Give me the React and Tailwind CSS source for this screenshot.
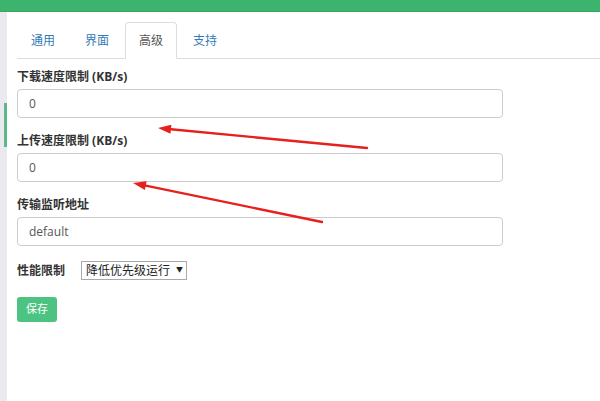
import { useState } from "react";

const tabs = ["通用", "界面", "高级", "支持"];

const fields = [
  { label: "下载速度限制 (KB/s)", value: "0" },
  { label: "上传速度限制 (KB/s)", value: "0" },
  { label: "传输监听地址", value: "default" },
];

const Arrow = ({ x1, y1, x2, y2 }) => {
  // tip is (x2, y2)
  const a = Math.atan2(y2 - y1, x2 - x1);
  const len = 13;
  const w = 4.5;
  const bx = x2 - len * Math.cos(a);
  const by = y2 - len * Math.sin(a);
  const px = -Math.sin(a) * w;
  const py = Math.cos(a) * w;
  return (
    <g>
      <line x1={x1} y1={y1} x2={bx} y2={by} stroke="#e5201d" strokeWidth="2.4" strokeLinecap="round" />
      <polygon points={`${x2},${y2} ${bx + px},${by + py} ${bx - px},${by - py}`} fill="#e5201d" />
    </g>
  );
};

export default function App() {
  const [active, setActive] = useState(2);

  return (
    <div
      className="relative h-[401px] w-[600px] overflow-hidden bg-white text-[12px] text-[#333]"
      style={{ fontFamily: '"Open Sans", "Noto Sans CJK SC", sans-serif' }}
    >
      <div className="h-[12px] border-b border-[#35a563] bg-[#3cb46e]" />

      <div className="flex h-[389px]">
        {/* left strip */}
        <div className="w-[7px] shrink-0 bg-[#e9e9ef] pt-[91px] pl-[4px]">
          <div className="h-[44px] w-[3px] bg-[#5cb88a]" />
        </div>

        <div className="flex-1 pl-[10px]">
          {/* tabs */}
          <div className="mt-[10px] flex gap-[2px] border-b border-[#ddd]">
            {tabs.map((t, i) => (
              <button
                key={t}
                onClick={() => setActive(i)}
                className={
                  i === active
                    ? "-mb-px h-[37px] w-[52px] rounded-t-[4px] border border-[#ddd] border-b-white bg-white text-[12px] text-[#555]"
                    : "-mb-px h-[37px] w-[52px] border border-transparent text-[12px] text-[#337ab7]"
                }
              >
                {t}
              </button>
            ))}
          </div>

          <div className="w-[486px] pt-[10px]">
            {fields.map((f) => (
              <div key={f.label} className="mb-[15px]">
                <div className="mb-[5px] h-[15px] font-bold leading-[15px] text-[#333]">{f.label}</div>
                <div className="flex h-[29px] items-center rounded-[4px] border border-[#ccc] px-[11px] text-[12px] text-[#555]">
                  {f.value}
                </div>
              </div>
            ))}

            <div className="flex items-center">
              <span className="w-[64px] font-bold text-[#333]">性能限制</span>
              <div className="flex h-[19px] w-[106px] items-center border border-[#a9a9a9] pl-[4px] text-[12px] text-[#222]">
                降低优先级运行
                <span className="ml-[6px] text-[7px]">▼</span>
              </div>
            </div>

            <button className="mt-[17px] h-[25px] w-[40px] rounded-[3px] bg-[#4cc382] text-[11px] text-white">保存</button>
          </div>
        </div>
      </div>

      <svg className="pointer-events-none absolute inset-0" width="600" height="401">
        <Arrow x1={367} y1={148} x2={158} y2={128} />
        <Arrow x1={322} y1={222} x2={133} y2={183} />
      </svg>
    </div>
  );
}
